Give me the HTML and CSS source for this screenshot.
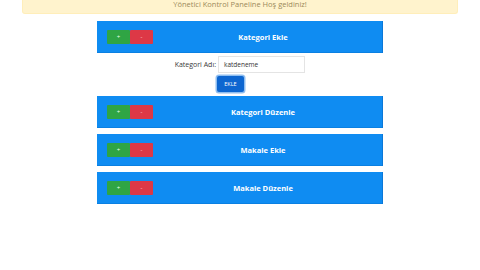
FILE: index.html
```html
<!DOCTYPE html>
<html lang="tr">
<head>
<meta charset="utf-8">
<link rel="stylesheet" href="styles.css">
</head>
<body>
<div class="alert">Yönetici Kontrol Paneline Hoş geldiniz!</div>
<div class="panel">
  <div class="bar">
    <div class="toggles"><span class="btn-plus">+</span><span class="btn-minus">-</span></div>
    <div class="title">Kategori Ekle</div>
  </div>
  <div class="form">
    <label class="label">Kategori Adı:</label>
    <div class="input">katdeneme</div>
    <div class="submit">EKLE</div>
  </div>
  <div class="bar">
    <div class="toggles"><span class="btn-plus">+</span><span class="btn-minus">-</span></div>
    <div class="title">Kategori Düzenle</div>
  </div>
  <div class="bar spaced">
    <div class="toggles"><span class="btn-plus">+</span><span class="btn-minus">-</span></div>
    <div class="title">Makale Ekle</div>
  </div>
  <div class="bar spaced">
    <div class="toggles"><span class="btn-plus">+</span><span class="btn-minus">-</span></div>
    <div class="title">Makale Düzenle</div>
  </div>
</div>
</body>
</html>
```
FILE: styles.css
```css
html, body {
  margin: 0;
  padding: 0;
  background: #ffffff;
  font-family: "Open Sans", "Noto Sans", "Liberation Sans", sans-serif;
}
.alert {
  margin: -5px 22px 0;
  padding: 4px 0 4px;
  line-height: 10px;
  font-size: 7.5px;
  text-align: center;
  color: #9c8a5a;
  background: #fff3cd;
  border: 1px solid #ffeeba;
  border-top: none;
  border-radius: 0 0 3px 3px;
}
.panel {
  width: 286px;
  margin: 7px auto 0;
  display: flex;
  flex-direction: column;
}
.bar {
  height: 32px;
  display: flex;
  align-items: center;
  padding-left: 10px;
  background: #0f8cf2;
  box-shadow: inset -1px 0 0 #0a78d8, inset 0 -1px 0 #0a80e2;
}
.spaced {
  margin-top: 6px;
}
.toggles {
  display: flex;
  height: 14px;
}
.btn-plus, .btn-minus {
  width: 23px;
  height: 14px;
  display: flex;
  align-items: center;
  justify-content: center;
  font-size: 6px;
  color: #e8ffe8;
  border-radius: 1px;
}
.btn-plus { background: #2fa544; }
.btn-minus { background: #dd3846; color: #ffd8dc; }
.title {
  flex: 1;
  text-align: center;
  padding-right: 10px;
  color: #ffffff;
  font-weight: 700;
  font-size: 7.5px;
}
.form {
  display: grid;
  grid-template-columns: 119px 87px;
  grid-template-rows: 17px 19px;
  column-gap: 2px;
  row-gap: 1px;
  padding: 3px 0 3px;
}
.label {
  justify-self: end;
  align-self: center;
  font-size: 7px;
  color: #3a3a3a;
}
.input {
  height: 17px;
  box-sizing: border-box;
  border: 1px solid #e4e4e4;
  padding: 0 5px;
  display: flex;
  align-items: center;
  font-size: 6.5px;
  color: #333333;
  background: #ffffff;
}
.submit {
  grid-column: 2;
  margin-left: -1px;
  margin-top: 1.5px;
  width: 27px;
  height: 16px;
  box-sizing: border-box;
  display: flex;
  align-items: center;
  justify-content: center;
  background: #0d66d0;
  color: #ffffff;
  font-size: 5.5px;
  border-radius: 2px;
  box-shadow: 0 0 0 1.5px #8fbef0;
}
```
